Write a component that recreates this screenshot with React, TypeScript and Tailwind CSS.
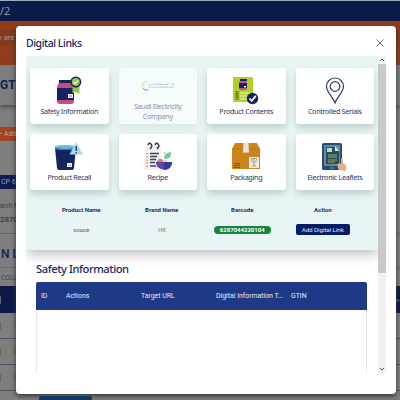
import type { ReactNode } from "react";

const NAVY = "#14245f";

function JarIcon() {
  return (
    <svg width="26" height="28" viewBox="0 0 26 28">
      <rect x="3" y="4" width="13" height="3" fill={NAVY} />
      <path d="M3 7h13q2 2 2 5v13q0 3-3 3H4q-3 0-3-3V12q0-3 2-5Z" fill="#c64c83" />
      <rect x="1" y="12" width="17" height="12" fill={NAVY} />
      <rect x="12" y="18" width="5" height="4" fill="#dce6f4" />
      <path d="M13 20h3" stroke="#7684b0" />
      <path d="M16.500 10h7v8l-3.500-2-3.500 1Z" fill="#93c640" />
      <circle cx="19.800" cy="6" r="5.500" fill={NAVY} />
      <circle cx="19.800" cy="6" r="4" fill="#93c640" />
      <path d="m17.800 6 1.500 1.600 3-3.200" fill="none" stroke="white" strokeWidth="1.200" />
    </svg>
  );
}

function ElectricityLogo() {
  return (
    <svg width="34" height="12" viewBox="0 0 34 12" fill="none">
      <path d="M7 1.500A4.500 4.500 0 0 0 1.500 7" stroke="#efd694" strokeWidth="1.200" />
      <path d="M2 8q2 3 5.500 1.500" stroke="#80bfd3" strokeWidth="1.300" />
      <path d="M8 4q1.500 2 0 4" stroke="#a6d0df" />
      <path d="M10 4.500h2l1-1 1 1h3l1-1.200v1.200h4l1-1 1 1h3v-1.500M31 3v1.500h2" stroke="#83b6ce" strokeWidth=".6" />
      <path d="M10 7.200h23" stroke="#9cc5d6" strokeWidth=".9" strokeDasharray="1.800 .4" />
    </svg>
  );
}

function ContentsIcon() {
  return (
    <svg width="26" height="29" viewBox="0 0 26 29">
      <path d="M0 1h20v25H0Z" fill="#b1cf27" />
      <rect x="7" y="3" width="7" height="2" fill={NAVY} />
      <rect x="6" y="5" width="8" height="9" rx="1.500" fill="#b95391" />
      <rect x="6" y="7" width="8" height="5" fill={NAVY} />
      <rect x="11" y="10" width="2" height="1.500" fill="white" />
      <path d="M7 17h10M7 20h7M7 23h7" stroke="#f1f7d5" strokeWidth="1.100" />
      <path d="M4 15v9" stroke="#51652e" strokeWidth="3" strokeDasharray="1.300 .8" />
      <circle cx="19.500" cy="22.500" r="5.700" fill={NAVY} />
      <path d="m16.500 22.500 2.300 2.400 4-5" fill="none" stroke="white" strokeWidth="1.700" />
    </svg>
  );
}

function PinIcon() {
  return (
    <svg width="20" height="28" viewBox="0 0 20 28" fill="none" stroke="#303d78" strokeWidth="1.200">
      <path d="M10 27C8 21 1.500 16 1.500 10.500a8.500 8.500 0 0 1 17 0C18.500 16 12 21 10 27Z" />
      <circle cx="10" cy="10.500" r="4.800" />
    </svg>
  );
}

function RecallIcon() {
  return (
    <svg width="30" height="29" viewBox="0 0 30 29">
      <path d="M1 6h21l-2 20q-.3 2-2 2H5q-1.700 0-2-2Z" fill="#15235f" />
      <path d="M1 4q10-2 21 0v3q-10 2-21 0Z" fill="#65bcd9" />
      <path d="M1 6.500q10 2 20 0" stroke="#2c74a5" fill="none" />
      <path d="m22 0 7 12.500H15.500Z" fill="#a6d9ed" />
      <path d="M22.200 4v5M22.200 10v1.500" stroke={NAVY} strokeWidth="1.200" />
      <rect x="13" y="21" width="5" height="4" fill="#e5f2fa" />
      <path d="M14 23.500h3" stroke="#9eb4d4" />
    </svg>
  );
}

function RecipeIcon() {
  return (
    <svg width="28" height="29" viewBox="0 0 28 29" fill="none">
      <path d="M1 4h16l1 20-4 4H0Z" fill="#f3eff2" />
      <path d="M4 3q1-3 3-1t-1 5M11 3q1-3 3-1t-1 5" stroke="#303746" strokeWidth="1.500" />
      <path d="M6 11.500h9M6 14.500h7M6 17.500h6M6 20.500h5M6 24h6" stroke="#3c4357" strokeWidth="1.400" />
      <path d="M3 11v15" stroke="#f39a69" strokeWidth="1.800" strokeDasharray="1.500 1.700" />
      <path d="M20 16q0-5 7-6 1 6-5 7Z" fill="#77c79b" />
      <circle cx="20.500" cy="11" r=".8" fill="#e7715a" />
      <path d="M13 20q1-4 4-3t3 3Z" fill="#e87957" />
      <path d="M19 20v-2q3-2 5 2" fill="#d6d5f5" />
      <path d="M12 20h16q0 5-4 7-5 2-9-1-3-2-3-6Z" fill="#5549b2" />
      <path d="M20 20h8q0 7-8 8Z" fill="#363b91" />
    </svg>
  );
}

function BoxIcon() {
  return (
    <svg width="28" height="28" viewBox="0 0 28 28">
      <path d="m3 1 22 0 3 6v20H0V7Z" fill="#ca851b" />
      <path d="M0 7h28" stroke="#b47518" strokeWidth=".7" />
      <path d="M11.500 1h5l.5 10-1-.7-1 .7-1-.7-1 .7-1-.7-1 .7Z" fill="#e7e5df" />
      <rect x="17" y="15" width="10" height="11" fill="#f1e9dc" />
      <path d="M19.500 16.500h5q0 4-2.500 4t-2.500-4M22 20.500V24m-2 0h4M22 16.500l-1 1.500 1.500 1" fill="none" stroke="#90868b" strokeWidth=".8" />
      <path d="M2 21.500h6M2 23.500h6M2 25.500h6" stroke="#76501b" strokeWidth=".9" />
    </svg>
  );
}

function LeafletIcon() {
  return (
    <svg width="25" height="29" viewBox="0 0 25 29">
      <rect x="0" y="1" width="20" height="27" rx="1.500" fill="#244d78" />
      <rect x="2" y="3" width="16" height="21" fill="#658ba4" />
      <path d="M4 5h9l4 4v13H4Z" fill="#244d65" />
      <path d="M13 4v5h4Z" fill="#e5ead1" />
      <rect x="5" y="6" width="5" height="4" fill="#c8d9b8" />
      <path d="M6 13h9M6 15h9M6 18h9M6 20h7" stroke="#a4a944" strokeWidth="1.200" />
      <path d="M8 26h4" stroke="#7998b3" />
      <path d="M17 28q-3-5 0-7l2 1v-5q1-2 2 0v4l3 2q1 4-1 6Z" fill="#dfb18c" />
    </svg>
  );
}

function Card({ icon, label, dim = false }: { icon: ReactNode; label: ReactNode; dim?: boolean }) {
  return (
    <div className={`flex h-14 flex-col items-center rounded-[3px] pt-[8px] ${dim ? "bg-[#f5fbfb] text-[#8793b3] shadow-[0_4px_7px_#c8dcdc80]" : "bg-white text-[#263568] shadow-[0_4px_7px_#b9cece]"}`}>
      <div className={`flex shrink-0 justify-center ${dim ? "h-[19px] items-center" : "h-[29px]"}`}>{icon}</div>
      <div className={`whitespace-nowrap text-center text-[7.2px] tracking-[-0.31px] ${dim ? "mt-[6px] leading-[10px] tracking-[-0.2px]" : "mt-px leading-[10px]"}`}>{label}</div>
    </div>
  );
}

function Backdrop() {
  return (
    <div className="flex h-full flex-col overflow-hidden whitespace-nowrap bg-[#7e7e7e] font-['Roboto',sans-serif] text-[7px] text-[#414141]">
      <div className="h-px shrink-0 bg-[#9aabc2]" />
      <div className="h-5 shrink-0 bg-[#0d1b48] font-['Noto_Sans',sans-serif] text-[11px] leading-[19px] text-[#8d94a9]">/2</div>
      <div className="h-11 shrink-0 bg-[#913c1b] pt-[9px]">
        <div className="h-4 bg-[#86391d] font-['Noto_Sans',sans-serif] leading-4 text-[#a9a0a0]">ı are</div>
      </div>
      <div className="h-10 shrink-0 bg-[#7c7d7e] text-[12px] font-bold leading-10 text-[#101d48] shadow-[0_2px_4px_#4b4b4b]">GTIN</div>
      <div className="h-[22px] shrink-0" />
      <div className="h-[14px] w-12 shrink-0 bg-[#a1441f] leading-[14px] text-[#b3aaa7]">• Add</div>
      <div className="h-[34px] shrink-0" />
      <div className="h-[14px] w-12 shrink-0 bg-[#0d1b53] pl-px leading-[14px] text-[#979da9]">CP 62</div>
      <div className="h-[45px] shrink-0 border-b border-[#666] pt-[10px]">
        <div className="h-[13px] text-[6.3px] leading-[14px]">arch M</div>
        <div className="text-[8px] leading-4 text-[#222]">2870</div>
      </div>
      <div className="h-[34px] shrink-0 border-b border-[#6d6d6d] pl-px text-[12px] font-medium leading-[40px] text-[#101d50]">N Li</div>
      <div className="h-[18px] shrink-0 pl-px text-[6.5px] leading-5 text-[#1c4b70]">COLL</div>
      <div className="flex h-[27px] shrink-0 items-center justify-between bg-[#0d1a49] text-[6px] text-[#898d9c]">
        <span className="h-2 w-px rounded-r-[2px] border-r border-[#626b8a]" />
        <span className="w-1">n</span>
      </div>
      {["1", "2", "3"].map((n) => (
        <div key={n} className="flex h-[26px] shrink-0 items-center border-b border-[#4c5061]">
          <span className="h-2 w-px border-r border-[#666]" />
          <span className="ml-[13px]">{n}</span>
        </div>
      ))}
      <div className="ml-[39px] mt-[5px] h-3 w-[53px] shrink-0 rounded-t-[2px] bg-[#0b3b72]" />
    </div>
  );
}

export default function App() {
  return (
    <div className="relative h-[400px] w-[400px] overflow-hidden">
      <Backdrop />
      <div className="absolute left-4 top-[26px] flex h-[368px] w-[380px] flex-col rounded-[4px] bg-white pl-[10px] font-['Noto_Sans',sans-serif] shadow-[0_2px_5px_#333]">
        <div className="flex h-[30px] shrink-0 items-center justify-between pr-3 pt-[4px]">
          <h1 className="text-[10.5px] font-medium leading-4 tracking-[-0.45px] text-[#172762]">Digital Links</h1>
          <svg width="8" height="8" viewBox="0 0 8 8" stroke="#666b76" strokeWidth="1"><path d="m.5.5 7 7m0-7-7 7" /></svg>
        </div>
        <div className="flex h-[317px] shrink-0 overflow-hidden">
          <div className="flex w-[352px] shrink-0 flex-col">
            <section className="h-[194px] shrink-0 bg-[#e9f5f4] px-1 pt-3 shadow-[0_4px_12px_#bdbdbd]">
              <div className="grid grid-cols-4 gap-[10px]">
                <Card icon={<JarIcon />} label="Safety Information" />
                <Card dim icon={<ElectricityLogo />} label={<>Saudi Electricity<br />Company</>} />
                <Card icon={<ContentsIcon />} label="Product Contents" />
                <Card icon={<PinIcon />} label="Controlled Serials" />
                <Card icon={<RecallIcon />} label="Product Recall" />
                <Card icon={<RecipeIcon />} label="Recipe" />
                <Card icon={<BoxIcon />} label="Packaging" />
                <Card icon={<LeafletIcon />} label="Electronic Leaflets" />
              </div>
              <div className="ml-[11px] mt-[15px] grid w-[322px] grid-cols-4 text-center font-['Roboto',sans-serif] text-[6px] leading-[10px]">
                {["Product Name", "Brand Name", "Barcode", "Action"].map((name) => (
                  <b key={name} className="whitespace-nowrap text-[#1a2e68]">{name}</b>
                ))}
                <span className="mt-[10px] font-medium text-[#6b7373]">souce</span>
                <span className="mt-[10px] text-[#7b8282]">H8</span>
                <span className="mx-auto mt-[11px] flex h-2 w-[57px] items-center justify-center rounded-full bg-[#16843e] font-bold text-white">6287044220104</span>
                <span className="mx-auto mt-[9px] flex h-[11px] w-[54px] items-center justify-center whitespace-nowrap rounded-[2px] bg-[#051d66] text-[6.2px] tracking-[-0.05px] text-[#e4e8f1]">Add Digital Link</span>
              </div>
            </section>
            <h2 className="ml-[10px] mt-[11px] h-[21px] shrink-0 text-[11.2px] font-medium leading-4 tracking-[-0.45px] text-[#172762]">Safety Information</h2>
            <div className="ml-[10px] flex h-[100px] w-[331px] shrink-0 flex-col border-x border-[#e9e9e9] font-['Roboto',sans-serif] text-[6.9px] text-[#e5eaf5]">
              <div className="-mx-px flex h-[28px] shrink-0 items-center whitespace-nowrap rounded-t-[2px] bg-[#1e3a86] pl-[5px]">
                <span className="w-[25px]">ID</span>
                <span className="w-[75px]">Actions</span>
                <span className="w-[75px]">Target URL</span>
                <span className="w-[75px]">Digital Information T...</span>
                <span>GTIN</span>
              </div>
            </div>
          </div>
          <div className="flex w-2 shrink-0 flex-col bg-[#f1f1f1]">
            <svg width="8" height="8" viewBox="0 0 8 8" fill="none" stroke="#555"><path d="m2 5 2-2 2 2" /></svg>
            <div className="h-[209px] bg-[#c9c9c9]" />
            <svg className="mt-auto" width="8" height="8" viewBox="0 0 8 8" fill="none" stroke="#555"><path d="m2 3 2 2 2-2" /></svg>
          </div>
        </div>
      </div>
    </div>
  );
}
